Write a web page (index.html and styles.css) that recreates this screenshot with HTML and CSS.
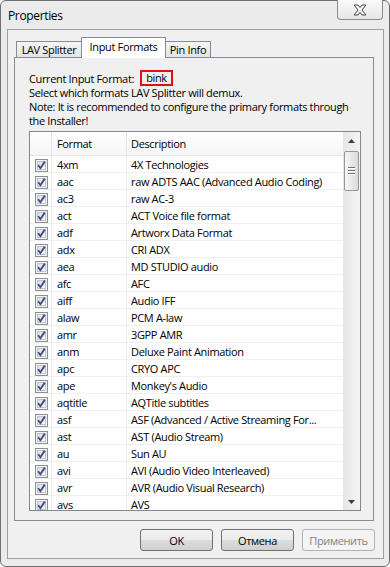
FILE: index.html
```html
<!DOCTYPE html>
<html lang="en">
<head>
    <meta charset="UTF-8">
    <meta name="viewport" content="width=device-width, initial-scale=1.0">
    <title>Properties</title>
    <link rel="stylesheet" href="styles.css">
</head>
<body>
    <svg class="defs" width="0" height="0">
        <defs>
            <linearGradient id="chkfill" x1="0" y1="0" x2="1" y2="1">
                <stop offset="0" stop-color="#dcdcdc"/>
                <stop offset="1" stop-color="#fbfbfb"/>
            </linearGradient>
            <symbol id="chk" viewBox="0 0 13 13">
                <rect x="0.5" y="0.5" width="12" height="12" fill="#f4f4f4" stroke="#8e8f8f"/>
                <rect x="2.5" y="2.5" width="8" height="8" fill="url(#chkfill)" stroke="#c4c4c4"/>
                <path d="M3.2 6.2 L5.4 9.2 L9.8 2.6" fill="none" stroke="#3b4f8c" stroke-width="1.9"/>
            </symbol>
        </defs>
    </svg>

    <div class="window">
        <div class="titlebar">
            <span class="title">Properties</span>
            <div class="close">
                <svg width="16" height="12" viewBox="0 0 16 12">
                    <path d="M2 1 H6 L8 3.5 L10 1 H14 L10 6 L14 11 H10 L8 8.5 L6 11 H2 L6 6 Z" fill="#f4f4f4" stroke="#4b4b4b" stroke-width="1"/>
                </svg>
            </div>
        </div>

        <div class="client">
            <div class="tabs">
                <div class="tab tab-lav">LAV Splitter</div>
                <div class="tab tab-input active">Input Formats</div>
                <div class="tab tab-pin">Pin Info</div>
            </div>

            <div class="panel">
                <div class="current">
                    <span>Current Input Format:</span>
                    <span class="fmt">bink</span>
                </div>
                <p class="info">Select which formats LAV Splitter will demux.</p>
                <p class="info">Note: It is recommended to configure the primary formats through<br>the Installer!</p>

                <div class="list">
                    <div class="list-body">
                        <div class="row head">
                            <div class="c1"></div>
                            <div class="c2">Format</div>
                            <div class="c3">Description</div>
                        </div>
                        <div class="row"><div class="c1"><svg class="cb"><use href="#chk"/></svg></div><div class="c2">4xm</div><div class="c3">4X Technologies</div></div>
                        <div class="row"><div class="c1"><svg class="cb"><use href="#chk"/></svg></div><div class="c2">aac</div><div class="c3">raw ADTS AAC (Advanced Audio Coding)</div></div>
                        <div class="row"><div class="c1"><svg class="cb"><use href="#chk"/></svg></div><div class="c2">ac3</div><div class="c3">raw AC-3</div></div>
                        <div class="row"><div class="c1"><svg class="cb"><use href="#chk"/></svg></div><div class="c2">act</div><div class="c3">ACT Voice file format</div></div>
                        <div class="row"><div class="c1"><svg class="cb"><use href="#chk"/></svg></div><div class="c2">adf</div><div class="c3">Artworx Data Format</div></div>
                        <div class="row"><div class="c1"><svg class="cb"><use href="#chk"/></svg></div><div class="c2">adx</div><div class="c3">CRI ADX</div></div>
                        <div class="row"><div class="c1"><svg class="cb"><use href="#chk"/></svg></div><div class="c2">aea</div><div class="c3">MD STUDIO audio</div></div>
                        <div class="row"><div class="c1"><svg class="cb"><use href="#chk"/></svg></div><div class="c2">afc</div><div class="c3">AFC</div></div>
                        <div class="row"><div class="c1"><svg class="cb"><use href="#chk"/></svg></div><div class="c2">aiff</div><div class="c3">Audio IFF</div></div>
                        <div class="row"><div class="c1"><svg class="cb"><use href="#chk"/></svg></div><div class="c2">alaw</div><div class="c3">PCM A-law</div></div>
                        <div class="row"><div class="c1"><svg class="cb"><use href="#chk"/></svg></div><div class="c2">amr</div><div class="c3">3GPP AMR</div></div>
                        <div class="row"><div class="c1"><svg class="cb"><use href="#chk"/></svg></div><div class="c2">anm</div><div class="c3">Deluxe Paint Animation</div></div>
                        <div class="row"><div class="c1"><svg class="cb"><use href="#chk"/></svg></div><div class="c2">apc</div><div class="c3">CRYO APC</div></div>
                        <div class="row"><div class="c1"><svg class="cb"><use href="#chk"/></svg></div><div class="c2">ape</div><div class="c3">Monkey's Audio</div></div>
                        <div class="row"><div class="c1"><svg class="cb"><use href="#chk"/></svg></div><div class="c2">aqtitle</div><div class="c3">AQTitle subtitles</div></div>
                        <div class="row"><div class="c1"><svg class="cb"><use href="#chk"/></svg></div><div class="c2">asf</div><div class="c3">ASF (Advanced / Active Streaming For...</div></div>
                        <div class="row"><div class="c1"><svg class="cb"><use href="#chk"/></svg></div><div class="c2">ast</div><div class="c3">AST (Audio Stream)</div></div>
                        <div class="row"><div class="c1"><svg class="cb"><use href="#chk"/></svg></div><div class="c2">au</div><div class="c3">Sun AU</div></div>
                        <div class="row"><div class="c1"><svg class="cb"><use href="#chk"/></svg></div><div class="c2">avi</div><div class="c3">AVI (Audio Video Interleaved)</div></div>
                        <div class="row"><div class="c1"><svg class="cb"><use href="#chk"/></svg></div><div class="c2">avr</div><div class="c3">AVR (Audio Visual Research)</div></div>
                        <div class="row"><div class="c1"><svg class="cb"><use href="#chk"/></svg></div><div class="c2">avs</div><div class="c3">AVS</div></div>
                    </div>

                    <!-- vertical scrollbar -->
                    <div class="scrollbar">
                        <div class="arrow">
                            <svg width="7" height="4" viewBox="0 0 7 4"><path d="M0 4 L3.5 0 L7 4 Z" fill="#404040"/></svg>
                        </div>
                        <div class="thumb">
                            <span class="grip"></span>
                            <span class="grip"></span>
                            <span class="grip"></span>
                        </div>
                        <div class="track"></div>
                        <div class="arrow">
                            <svg width="7" height="4" viewBox="0 0 7 4"><path d="M0 0 L3.5 4 L7 0 Z" fill="#404040"/></svg>
                        </div>
                    </div>
                </div>
            </div>

            <div class="buttons">
                <button class="btn">OK</button>
                <button class="btn">Отмена</button>
                <button class="btn" disabled>Применить</button>
            </div>
        </div>
    </div>
</body>
</html>
```

FILE: styles.css
```css
body {
    margin: 0;
    background: #ffffff;
    font-family: "Open Sans", "Liberation Sans", sans-serif;
    font-size: 11px;
    letter-spacing: -0.35px;
    color: #000000;
}

.defs {
    position: absolute;
}

.window {
    width: 390px;
    height: 567px;
    box-sizing: border-box;
    border: 1px solid #707070;
    border-radius: 6px;
    background: #ebebeb;
    padding: 0 5px 7px 6px;
    display: flex;
    flex-direction: column;
}

.titlebar {
    height: 28px;
    display: flex;
    justify-content: space-between;
    align-items: flex-start;
}

.title {
    margin: 6px 0 0 1px;
    font-size: 12px;
}

.close {
    width: 46px;
    height: 20px;
    box-sizing: border-box;
    margin: -1px 1px 0 0;
    border: 1px solid #8a8a8a;
    border-top: none;
    border-radius: 0 0 4px 4px;
    background: linear-gradient(#fafafa, #e6e6e6);
    display: flex;
    align-items: center;
    justify-content: center;
}

.client {
    flex: 1;
    border: 1px solid #a0a0a0;
    background: #f0f0f0;
    padding: 7px 9px 0 6px;
    display: flex;
    flex-direction: column;
}

.tabs {
    height: 20px;
    display: flex;
    align-items: flex-end;
    padding-left: 2px;
}

.tab {
    height: 16px;
    box-sizing: border-box;
    border: 1px solid #898c95;
    border-bottom: none;
    background: linear-gradient(#f6f6f6, #e3e3e3);
    line-height: 15px;
    text-align: center;
}

.tab-lav {
    width: 66px;
}

.tab-input {
    width: 85px;
    margin-left: -1px;
}

.tab-pin {
    width: 46px;
    margin-left: -1px;
}

.tab.active {
    height: 21px;
    margin-bottom: -1px;
    background: #ffffff;
    line-height: 17px;
    position: relative;
    z-index: 1;
}

.panel {
    height: 464px;
    box-sizing: border-box;
    border: 1px solid #898c95;
    background: #f0f0f0;
    padding: 0 12px 0 14px;
}

.current {
    margin-top: 12px;
    height: 16px;
    display: flex;
    align-items: center;
}

.fmt {
    width: 33px;
    height: 16px;
    box-sizing: border-box;
    margin-left: 6px;
    border: 2px solid #e01010;
    line-height: 12px;
    text-align: center;
}

.info {
    margin: 0;
    line-height: 14px;
    white-space: nowrap;
}

.list {
    margin-top: 3px;
    height: 380px;
    box-sizing: border-box;
    border: 1px solid #828790;
    background: #ffffff;
    display: flex;
}

.list-body {
    flex: 1;
    overflow: hidden;
}

.row {
    height: 17px;
    box-sizing: border-box;
    border-bottom: 1px solid #f0f0f0;
    display: flex;
    line-height: 17px;
}

.row.head {
    height: 24px;
    border-bottom: 1px solid #e5e5e5;
    background: linear-gradient(#ffffff, #f4f5f7);
    line-height: 23px;
}

.c1 {
    width: 22px;
    box-sizing: border-box;
    border-right: 1px solid #f0f0f0;
    padding: 3px 0 0 5px;
}

.c2 {
    width: 75px;
    box-sizing: border-box;
    border-right: 1px solid #f0f0f0;
    padding-left: 5px;
}

.c3 {
    flex: 1;
    padding-left: 4px;
    white-space: nowrap;
    overflow: hidden;
}

.head .c1,
.head .c2 {
    border-right-color: #e5e5e5;
}

.cb {
    width: 13px;
    height: 13px;
    display: block;
}

.scrollbar {
    width: 17px;
    background: linear-gradient(to right, #e6e6e6, #f4f4f4);
    display: flex;
    flex-direction: column;
    align-items: center;
}

.arrow {
    height: 17px;
    width: 17px;
    display: flex;
    align-items: center;
    justify-content: center;
}

.thumb {
    width: 15px;
    height: 40px;
    box-sizing: border-box;
    margin-top: 2px;
    border: 1px solid #979797;
    border-radius: 2px;
    background: linear-gradient(to right, #f6f6f6, #dadada);
    display: flex;
    flex-direction: column;
    align-items: center;
    justify-content: center;
    gap: 1px;
}

.grip {
    width: 7px;
    height: 1px;
    background: #6e6e6e;
    border-bottom: 1px solid #ffffff;
}

.track {
    flex: 1;
}

.buttons {
    margin: 8px -1px 0 0;
    display: flex;
    justify-content: flex-end;
    gap: 8px;
}

.btn {
    width: 73px;
    height: 22px;
    border: 1px solid #707070;
    border-radius: 3px;
    background: linear-gradient(#f2f2f2 0%, #ebebeb 50%, #dddddd 51%, #cfcfcf 100%);
    font-family: "Open Sans", "Liberation Sans", sans-serif;
    font-size: 11px;
    letter-spacing: -0.35px;
    color: #000000;
    padding: 0;
}

.btn:disabled {
    border-color: #adb2b5;
    background: #f4f4f4;
    color: #838383;
}
```
